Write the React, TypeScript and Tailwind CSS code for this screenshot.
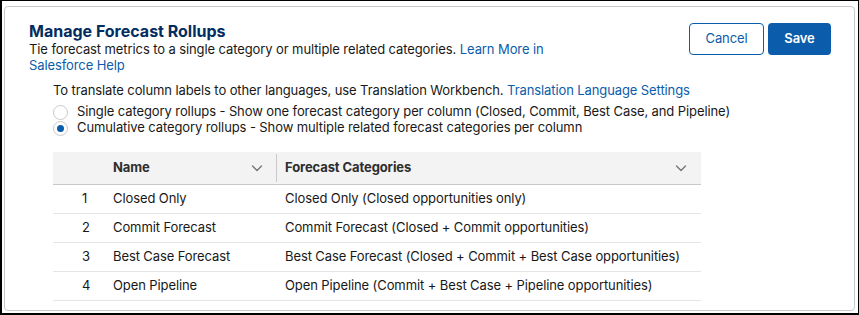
import React from "react";

const Chevron = () => (
  <svg width="12" height="12" viewBox="0 0 12 12" fill="none">
    <path d="M1.5 4 L6 8.5 L10.5 4" stroke="#747474" strokeWidth="1.3" strokeLinecap="round" strokeLinejoin="round" />
  </svg>
);

const rows = [
  ["1", "Closed Only", "Closed Only (Closed opportunities only)"],
  ["2", "Commit Forecast", "Commit Forecast (Closed + Commit opportunities)"],
  ["3", "Best Case Forecast", "Best Case Forecast (Closed + Commit + Best Case opportunities)"],
  ["4", "Open Pipeline", "Open Pipeline (Commit + Best Case + Pipeline opportunities)"],
];

export default function App() {
  return (
    <div
      className="w-[859px] h-[315px] bg-white border-black border-t border-r border-l-2 border-b-2 pl-[2px] pt-[5px] text-[13px] tracking-[-0.1px] text-[#181818]"
      style={{ fontFamily: "Inter, 'Noto Sans', sans-serif" }}
    >
      <div className="w-[851px] h-[305px] border border-[#c9c9c9] rounded-[4px] pl-[24px] pr-[23px] pt-[14px]">
        <div className="flex justify-between items-start">
          <div className="w-[540px]">
            <div className="text-[16px] leading-[20px] font-bold text-[#032d60] tracking-[0px]">Manage Forecast Rollups</div>
            <div className="leading-[16px]">
              <div>
                Tie forecast metrics to a single category or multiple related categories.{" "}
                <span className="text-[#0b5cab]">Learn More in</span>
              </div>
              <div className="text-[#0b5cab]">Salesforce Help</div>
            </div>
          </div>
          <div className="flex gap-[4px] mt-[2px]">
            <button className="h-[32px] w-[75px] rounded-[4px] border border-[#0b5cab] text-[#0b5cab] bg-white text-[13px]">
              Cancel
            </button>
            <button className="h-[32px] w-[63px] rounded-[4px] bg-[#0b5cab] text-white text-[13px] font-semibold">
              Save
            </button>
          </div>
        </div>
        <div className="pl-[24px]">
          <div className="leading-[16px] mt-[9px]">
            To translate column labels to other languages, use Translation Workbench.{" "}
            <span className="text-[#0b5cab]">Translation Language Settings</span>
          </div>
          <div className="mt-[6px] flex items-center h-[16px]">
            <span className="w-[15px] h-[15px] rounded-full border border-[#c9c9c9] bg-white mr-[9px]" />
            <span>Single category rollups - Show one forecast category per column (Closed, Commit, Best Case, and Pipeline)</span>
          </div>
          <div className="flex items-center h-[16px]">
            <span className="w-[15px] h-[15px] rounded-full border border-[#c9c9c9] bg-white mr-[9px] flex items-center justify-center">
              <span className="w-[7px] h-[7px] rounded-full bg-[#0b5cab]" />
            </span>
            <span>Cumulative category rollups - Show multiple related forecast categories per column</span>
          </div>
          <div className="mt-[16px] w-[648px]">
            <div className="flex h-[33px] bg-[#f3f3f3] border-b border-[#c9c9c9] font-bold text-[#2e2e2e]">
              <div className="w-[60px]" />
              <div className="w-[163px] flex items-center justify-between pr-[13px]">
                <span>Name</span>
                <Chevron />
              </div>
              <div className="w-px bg-[#c9c9c9] my-[2px]" />
              <div className="flex-1 flex items-center justify-between pl-[8px] pr-[14px]">
                <span>Forecast Categories</span>
                <Chevron />
              </div>
            </div>
            {rows.map(([n, name, cat]) => (
              <div key={n} className="flex h-[29px] border-b border-[#e5e5e5] items-center">
                <div className="w-[60px] pl-[29px]">{n}</div>
                <div className="w-[164px]">{name}</div>
                <div className="flex-1 pl-[8px]">{cat}</div>
              </div>
            ))}
          </div>
        </div>
      </div>
    </div>
  );
}
